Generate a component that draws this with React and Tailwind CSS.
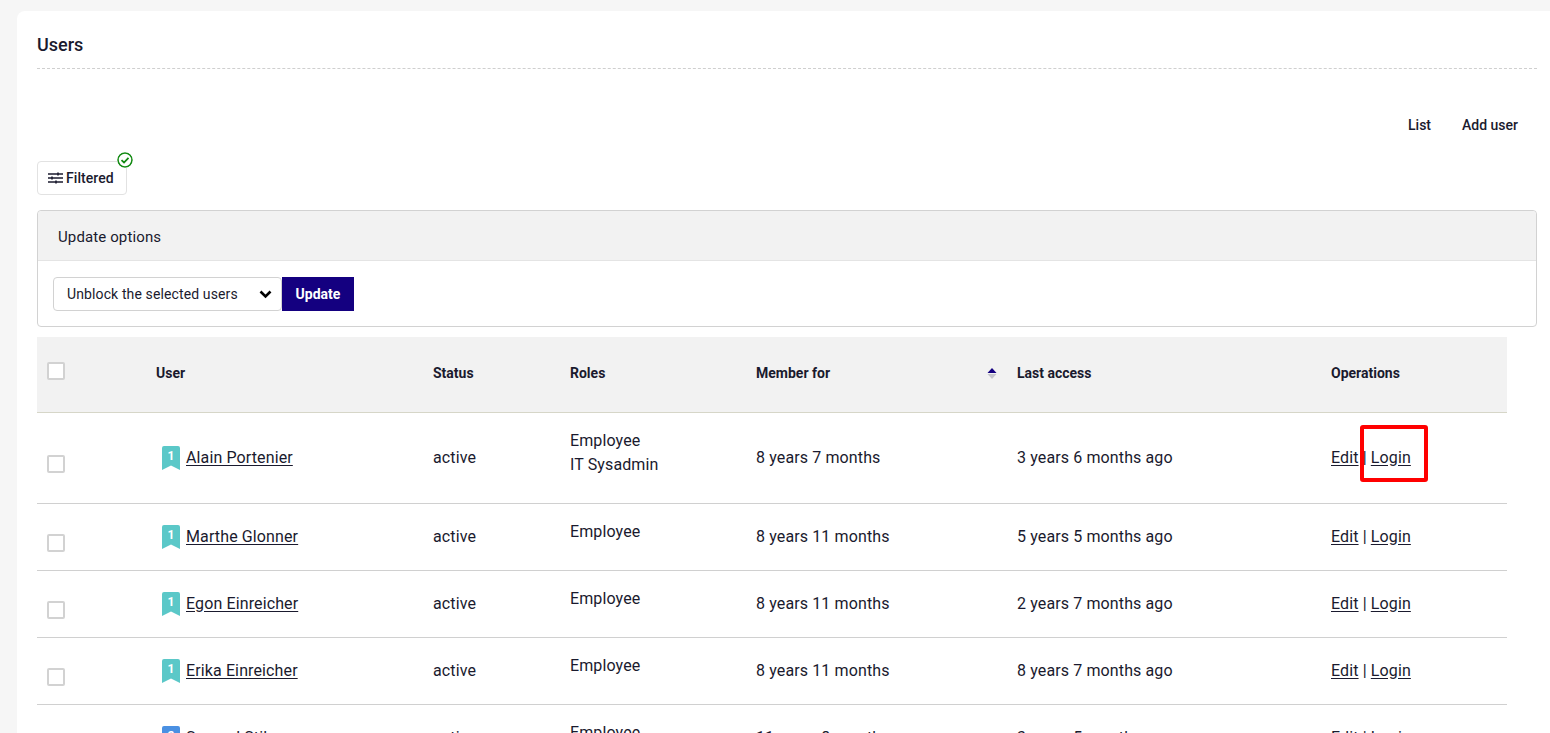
import React from "react";

function Badge({ n, color }) {
  return (
    <span className="relative mr-[6px] inline-block h-[24px] w-[18px] shrink-0">
      <svg width="18" height="24" viewBox="0 0 18 24" className="absolute left-0 top-0">
        <path d="M2 0H16A2 2 0 0 1 18 2V24L9 19.5L0 24V2A2 2 0 0 1 2 0Z" fill={color} />
      </svg>
      <span className="absolute left-0 top-[2px] w-full text-center text-[12px] font-bold leading-[16px] text-white">{n}</span>
    </span>
  );
}

function Box() {
  return <span className="block h-[18px] w-[18px] rounded-[2px] border-2 border-[#d2d2d2] bg-white" />;
}

const link = "text-[#1a1a2e] underline underline-offset-2";

function Row({ name, badge = 1, color = "#5bc8c8", roles, member, last, h = "h-[67px]", rolesClass = "pb-[10px]", boxClass = "pt-[13px]" }) {
  return (
    <tr className={`${h} border-b border-[#d0d0d0]`}>
      <td className="px-[10px]">
        <div className={boxClass}><Box /></div>
      </td>
      <td className="pl-[16px]">
        <div className="flex items-center">
          <Badge n={badge} color={color} />
          <a className={link}>{name}</a>
        </div>
      </td>
      <td className="pl-[10px]">active</td>
      <td className={`pl-[10px] ${rolesClass} leading-[24px]`}>
        {roles.map((r) => <div key={r}>{r}</div>)}
      </td>
      <td className="pl-[10px]">{member}</td>
      <td className="pl-[10px]">{last}</td>
      <td className="pl-[10px]">
        <a className={link}>Edit</a> | <a className={link}>Login</a>
      </td>
    </tr>
  );
}

const Th = ({ children, className = "" }) => (
  <th className={`px-[10px] pb-[2px] text-left text-[14px] font-bold tracking-normal ${className}`}>{children}</th>
);

export default function App() {
  return (
    <div className="relative h-[733px] overflow-hidden bg-[#f6f6f6] pl-[17px] pt-[11px] text-[16px] tracking-[0.12px] text-[#1a1a2e] [font-family:Roboto,sans-serif]">
      <div className="h-[740px] rounded-tl-[8px] bg-white pl-[20px] pr-[13px]">
        <div className="flex h-[58px] items-end border-b border-dashed border-[#cfcfcf] pb-[13px]">
          <h1 className="text-[18px] font-medium leading-[20px] tracking-normal">Users</h1>
        </div>
        <div className="flex justify-end gap-[31px] pr-[19px] pt-[47px] text-[14px] font-medium leading-[18px] tracking-normal">
          <a>List</a>
          <a>Add user</a>
        </div>
        <div className="relative mt-[27px] flex h-[34px] w-[90px] items-center gap-[3px] rounded-[4px] border border-[#e2e2e2] pl-[10px] text-[14px] font-medium tracking-[0.05px]">
          <svg width="15" height="12" viewBox="0 0 15 12" fill="none" stroke="#1a1a2e" strokeWidth="1.5">
            <path d="M0 2H15M0 6H15M0 10H15" />
            <path d="M10 0.5V3.5M4 4.5V7.5M8 8.5V11.5" strokeWidth="1.6" />
          </svg>
          Filtered
          <svg width="16" height="16" viewBox="0 0 16 16" fill="none" className="absolute left-[79px] top-[-10px] rounded-full bg-white">
            <circle cx="8" cy="8" r="7" stroke="#138a13" strokeWidth="1.6" />
            <path d="M4.5 8.2L7 10.5L11.5 5.8" stroke="#138a13" strokeWidth="1.8" />
          </svg>
        </div>
        <div className="mt-[15px] h-[117px] rounded-[4px] border border-[#d2d2d2]">
          <div className="flex h-[50px] items-center rounded-t-[4px] border-b border-[#e4e4e4] bg-[#f2f2f2] pl-[20px] pt-[3px] text-[15px]">Update options</div>
          <div className="flex pl-[15px] pt-[16px]">
            <div className="flex h-[34px] w-[229px] items-center justify-between rounded-[4px] border border-[#d2d2d2] pl-[13px] pr-[9px] text-[14px]">
              <span>Unblock the selected users</span>
              <svg width="13" height="9" viewBox="0 0 13 9" fill="none"><path d="M1.5 1.5L6.5 6.5L11.5 1.5" stroke="#000" strokeWidth="2.6" /></svg>
            </div>
            <button className="h-[34px] w-[72px] bg-[#140080] text-[14px] font-bold tracking-normal text-white">Update</button>
          </div>
        </div>
        <table className="mt-[10px] w-[1470px] table-fixed border-collapse">
          <colgroup>
            <col className="w-[109px]" />
            <col className="w-[277px]" />
            <col className="w-[137px]" />
            <col className="w-[186px]" />
            <col className="w-[261px]" />
            <col className="w-[314px]" />
            <col className="w-[186px]" />
          </colgroup>
          <thead>
            <tr className="h-[75px] border-b border-[#d6d6c8] bg-[#f2f2f2]">
              <Th><div className="pb-[4px]"><Box /></div></Th>
              <Th>User</Th>
              <Th>Status</Th>
              <Th>Roles</Th>
              <Th>
                <div className="flex items-center justify-between">
                  <span>Member for</span>
                  <svg width="10" height="11" viewBox="0 0 10 11">
                    <path d="M5 0L9.5 5H0.5Z" fill="#140080" />
                    <path d="M0.5 6H9.5L5 11Z" fill="#c4c4cc" />
                  </svg>
                </div>
              </Th>
              <Th>Last access</Th>
              <Th>Operations</Th>
            </tr>
          </thead>
          <tbody>
            <Row h="h-[91px]" name="Alain Portenier" roles={["Employee", "IT Sysadmin"]} member="8 years 7 months" last="3 years 6 months ago" rolesClass="pb-[10px]" />
            <Row name="Marthe Glonner" roles={["Employee"]} member="8 years 11 months" last="5 years 5 months ago" />
            <Row name="Egon Einreicher" roles={["Employee"]} member="8 years 11 months" last="2 years 7 months ago" />
            <Row name="Erika Einreicher" roles={["Employee"]} member="8 years 11 months" last="8 years 7 months ago" />
            <Row name="Samuel Stiles" badge={2} color="#4a90e2" roles={["Employee"]} member="11 years 8 months" last="3 years 5 months ago" />
          </tbody>
        </table>
      </div>
      <div className="absolute left-[1360px] top-[425px] h-[57px] w-[68px] rounded-[3px] border-[4px] border-[#ff0000]" />
    </div>
  );
}
